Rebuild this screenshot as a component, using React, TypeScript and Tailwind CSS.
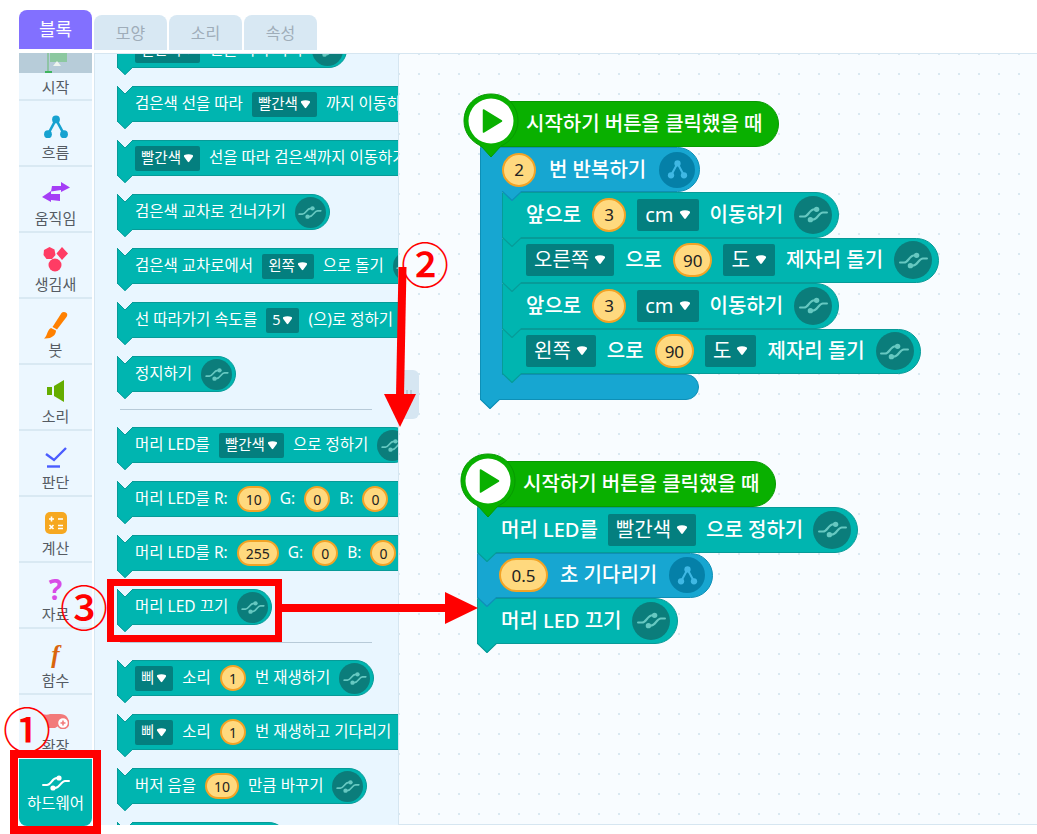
import type { ReactNode } from "react";

const TEAL = "bg-[#00b5b0] border-[#079b98]";
const BLUE = "bg-[#17a6d1] border-[#0e8fb6]";

function HwIcon({ className }: { className: string }) {
  return (
    <svg viewBox="0 0 28 18" className={className} fill="none" stroke="currentColor" strokeWidth="2" strokeLinecap="round">
      <path d="M1 11 H5 C9 11 10 4 15 4" />
      <path d="M27 7 H23 C19 7 18 14 13 14" />
      <circle cx="17" cy="4" r="2.6" fill="currentColor" stroke="none" />
      <circle cx="11" cy="14" r="2.6" fill="currentColor" stroke="none" />
    </svg>
  );
}

function FlowIcon({ className }: { className: string }) {
  return (
    <svg viewBox="0 0 24 24" className={className} fill="currentColor" stroke="currentColor" strokeWidth="2.4">
      <path d="M12 5 L5 18 M12 5 L19 18" fill="none" />
      <circle cx="12" cy="5" r="3.6" stroke="none" />
      <circle cx="4.6" cy="18.6" r="3.6" stroke="none" />
      <circle cx="19.4" cy="18.6" r="3.6" stroke="none" />
    </svg>
  );
}

function Caret({ big }: { big?: boolean }) {
  return (
    <svg viewBox="0 0 12 10" className={big ? "w-[12px] h-[10px] ml-[5px]" : "w-[11px] h-[9px] ml-[2px]"}>
      <path d="M1.5 1.2 C4 0 8 0 10.5 1.2 C11.5 2 11 3 10.5 3.6 L6.8 8.6 C6.3 9.2 5.7 9.2 5.2 8.6 L1.5 3.6 C1 3 .5 2 1.5 1.2 Z" fill="#fff" />
    </svg>
  );
}

function Dd({ v, big }: { v: string; big?: boolean }) {
  return (
    <span className={big ? "flex items-center h-[32px] px-[8px] rounded-[2px] bg-[#047f7f] text-white font-normal text-[20px]" : "flex items-center h-[25px] px-[6px] rounded-[2px] bg-[#047f7f] text-white text-[14.5px]"}>
      {v}
      <Caret big={big} />
    </span>
  );
}

function Num({ v, big, wide }: { v: string; big?: boolean; wide?: boolean }) {
  return (
    <span className={big ? `flex items-center justify-center h-[34px] min-w-[34px] ${wide ? "w-[49px]" : "px-[8px]"} rounded-full bg-[#ffd97e] border-2 border-[#f3a325] text-[#222] font-normal text-[17px]` : "flex items-center justify-center h-[26px] min-w-[26px] px-[7px] rounded-full bg-[#ffd97e] border-2 border-[#f3a325] text-[#222] text-[14px]"}>
      {v}
    </span>
  );
}

function Ico({ big, flow }: { big?: boolean; flow?: boolean }) {
  const size = big ? "w-[38px] h-[38px]" : "w-[31px] h-[31px]";
  if (flow) {
    return (
      <span className="w-[36px] h-[36px] shrink-0 flex items-center justify-center rounded-full bg-[#0580a8] text-[#3fb8e4]">
        <FlowIcon className="w-[21px] h-[21px]" />
      </span>
    );
  }
  return (
    <span className={`${size} shrink-0 flex items-center justify-center rounded-full bg-[#0b7d7b] text-[#66c8c1]`}>
      <HwIcon className={big ? "w-[29px] h-[19px]" : "w-[24px] h-[15px]"} />
    </span>
  );
}

// notch on top, tab underneath
function Block({ children, big, tone = TEAL, tabFill = "#00b5b0", tabStroke = "#079b98", tabLeft = "left-[-1px]", className = "", notch = true }: {
  children?: ReactNode;
  big?: boolean;
  tone?: string;
  tabFill?: string;
  tabStroke?: string;
  tabLeft?: string;
  className?: string;
  notch?: boolean;
}) {
  const base = big
    ? "h-[45.5px] pl-[23px] pr-[6px] gap-[11px] rounded-r-[23px] text-[20px] font-medium"
    : "h-[36px] pl-[17px] pr-[3px] gap-[9px] rounded-r-[18px] text-[15.5px]";
  return (
    <div className={`relative w-max flex items-center border text-white whitespace-nowrap ${tone} ${base} ${className}`}>
      {notch && !big && (
        <svg viewBox="0 0 16 8" className="absolute left-[-1px] top-[-1px] w-[16px] h-[8px]">
          <path d="M0 0 L8 8 L16 0 Z" fill="#e9f6ff" />
          <path d="M0 0 L8 8 L16 0" fill="none" stroke="#079b98" />
        </svg>
      )}
      {children}
      <svg viewBox="0 0 20 10" preserveAspectRatio="none" className={`absolute z-10 ${tabLeft} ${big ? "bottom-[-10px] w-[20px] h-[10px]" : "bottom-[-8px] w-[16px] h-[8px]"}`}>
        <path d="M0 0 L10 10 L20 0 Z" fill={tabFill} />
        <path d="M0 0 L10 9.5 L20 0" fill="none" stroke={tabStroke} strokeWidth="1.2" />
      </svg>
    </div>
  );
}

function Hat() {
  return (
    <div className="relative w-max ml-[18px] mt-[9px] h-[46px] pl-[45px] pr-[16px] flex items-center rounded-r-[23px] bg-[#09b000] border border-[#079a00] text-white text-[20px] font-medium whitespace-nowrap">
      시작하기 버튼을 클릭했을 때
      <svg viewBox="0 0 56 66" className="absolute z-20 left-[-18px] top-[-9px] w-[56px] h-[66px]">
        <path d="M28 1 C44 1 55 13 55 28 C55 40 47 49 38 53 L28 64 L18 53 C9 49 1 40 1 28 C1 13 12 1 28 1 Z" fill="#09b000" stroke="#079a00" />
        <circle cx="28" cy="28" r="22.5" fill="#fff" />
        <path d="M20.5 17 L38.5 28 L20.5 39 Z" fill="#09b000" stroke="#09b000" strokeWidth="1.5" strokeLinejoin="round" />
      </svg>
    </div>
  );
}

function SideItem({ label, icon, border = true }: { label: string; icon: ReactNode; border?: boolean }) {
  return (
    <div className={`h-[66px] shrink-0 flex flex-col items-center pt-[10px] ${border ? "border-b-2 border-[#d9e9f3]" : ""}`}>
      <div className="h-[31px] flex items-center justify-center">{icon}</div>
      <span className="text-[15px] leading-[21px] text-[#555b63]">{label}</span>
    </div>
  );
}

function Gap() {
  return <div className="h-[18px] shrink-0" />;
}

function Divider() {
  return <div className="my-[17px] h-[1px] w-[252px] ml-[3px] bg-[#b7cad8]" />;
}

export default function App() {
  return (
    <div className="relative w-[1037px] h-[834px] overflow-hidden bg-white [font-family:'Noto_Sans','Noto_Sans_CJK_KR',sans-serif]">
      {/* tabs */}
      <div className="h-[53px] pl-[19px] flex gap-[2px]">
        <div className="mt-[10px] h-[39px] w-[73px] flex items-center justify-center rounded-t-[8px] bg-[#8270ff] text-white text-[18px]">블록</div>
        <div className="mt-[15px] h-[35px] w-[73px] flex items-center justify-center rounded-t-[8px] bg-[#d8e8f3] text-[#9fadb9] text-[16px]">모양</div>
        <div className="mt-[15px] h-[35px] w-[73px] flex items-center justify-center rounded-t-[8px] bg-[#d8e8f3] text-[#9fadb9] text-[16px]">소리</div>
        <div className="mt-[15px] h-[35px] w-[73px] flex items-center justify-center rounded-t-[8px] bg-[#d8e8f3] text-[#9fadb9] text-[16px]">속성</div>
      </div>

      <div className="flex h-[773px] pl-[19px]">
        {/* categories */}
        <div className="w-[73px] mr-[2px] shrink-0 flex flex-col bg-[#ecf7ff] overflow-hidden">
          <div className="h-[48px] shrink-0 border-b-2 border-[#d9e9f3] flex flex-col items-center">
            <div className="h-[20px] w-full shrink-0 bg-[#b7ccd9] flex justify-center overflow-hidden">
              <svg viewBox="0 0 34 20" className="w-[34px] h-[20px]">
                <rect x="8" y="0" width="2" height="19" fill="#8fc4a6" />
                <rect x="11" y="0" width="17" height="9" fill="#8cc8a0" />
                <path d="M14 13 L18 8 L22 13 Z" fill="#eef5ee" />
                <rect x="6" y="18" width="7" height="2" fill="#3fb45f" />
              </svg>
            </div>
            <span className="mt-[4px] text-[15px] leading-[20px] text-[#555b63]">시작</span>
          </div>
          <SideItem label="흐름" icon={<FlowIcon className="w-[26px] h-[26px] text-[#17a2d0]" />} />
          <SideItem label="움직임" icon={
            <svg viewBox="0 0 28 24" className="w-[28px] h-[24px]" fill="#a53df6">
              <path d="M10 5 H19 V1 L28 6.5 L19 11 V9 L9 10.5 Z" />
              <path d="M18 13 H9 V10 L0 16 L9 21 V19 L18 20 Z" />
            </svg>
          } />
          <SideItem label="생김새" icon={
            <svg viewBox="0 0 26 26" className="w-[26px] h-[26px]" fill="#ff3c64">
              <path d="M6.5 1 L11.5 3.5 L12.5 9 L9 13 L3.5 13 L0.5 9 L1 4 Z" />
              <path d="M19 1 L25 7.5 L19 14 L13.5 7.5 Z" />
              <circle cx="12" cy="19" r="6.5" />
            </svg>
          } />
          <SideItem label="붓" icon={
            <svg viewBox="0 0 24 28" className="w-[24px] h-[28px]" fill="#ff8000">
              <path d="M17.5 2 C18.5 0.5 21 0.5 22.5 2 C23.5 3 23.5 4.5 22.5 6 L13 18.5 L8.5 16 Z" />
              <path d="M7 17 L12 19.5 C12 24 8 28 0 27.5 C3.5 25.5 2.5 19.5 7 17 Z" />
            </svg>
          } />
          <SideItem label="소리" icon={
            <svg viewBox="0 0 18 22" className="w-[18px] h-[22px]" fill="#65ad00">
              <rect x="0" y="7" width="5" height="8" />
              <path d="M7 6 L17 0 V22 L7 16 Z" />
            </svg>
          } />
          <SideItem label="판단" icon={
            <svg viewBox="0 0 22 22" className="w-[22px] h-[22px]" fill="none" stroke="#4a5cff" strokeWidth="2.4">
              <path d="M1 8 L9 14 L21 2" />
              <path d="M2 20.5 H15" />
            </svg>
          } />
          <SideItem label="계산" icon={
            <svg viewBox="0 0 22 22" className="w-[22px] h-[22px]">
              <rect width="22" height="22" rx="5" fill="#f6a821" />
              <path d="M4 7 H9 M6.5 4.5 V9.5 M13 7 H18 M4.5 13 L8.5 17 M8.5 13 L4.5 17 M13 13.5 H18 M13 16.5 H18" stroke="#fff" strokeWidth="1.6" />
            </svg>
          } />
          <SideItem label="자료" icon={<span className="text-[28px] leading-none font-bold text-[#d84be6]">?</span>} />
          <SideItem label="함수" icon={<span className="text-[25px] leading-none font-bold italic text-[#d9650c] [font-family:'Liberation_Serif',serif]">f</span>} />
          <SideItem label="확장" border={false} icon={
            <svg viewBox="0 0 26 16" className="w-[26px] h-[16px]">
              <path d="M0 1 C2 2 5 2 7 1 H17 C23 1 26 5 25 9 H22 L12 15 H5 L4 9 Z" fill="#f27a7a" />
              <circle cx="20" cy="10" r="5.6" fill="#fff" stroke="#f27a7a" strokeWidth="1.6" />
              <path d="M17.5 10 H22.5 M20 7.5 V12.5" stroke="#f27a7a" strokeWidth="1.6" />
            </svg>
          } />
          <div className="mt-[-2px] flex-1 flex flex-col items-center pt-[15px] bg-[#00b5b0] rounded-b-[8px] text-white">
            <HwIcon className="w-[28px] h-[18px]" />
            <span className="mt-[1px] text-[15.5px] leading-[20px]">하드웨어</span>
          </div>
        </div>

        {/* block palette */}
        <div className="w-[305px] shrink-0 h-[772px] overflow-hidden bg-[#e9f6ff] border-t border-x border-[#d6e6f1]">
          <div className="mt-[-22px] pl-[22px] flex flex-col">
            <Block><Dd v="빨간색" /><span>선을 따라 가기</span><Ico /></Block>
            <Gap />
            <Block>검은색 선을 따라<Dd v="빨간색" />까지 이동하기<Ico /></Block>
            <Gap />
            <Block><Dd v="빨간색" />선을 따라 검은색까지 이동하기<Ico /></Block>
            <Gap />
            <Block>검은색 교차로 건너가기<Ico /></Block>
            <Gap />
            <Block>검은색 교차로에서<Dd v="왼쪽" />으로 돌기<Ico /></Block>
            <Gap />
            <Block>선 따라가기 속도를<Dd v="5" />(으)로 정하기<Ico /></Block>
            <Gap />
            <Block>정지하기<Ico /></Block>
            <Divider />
            <Block>머리 LED를<Dd v="빨간색" />으로 정하기<Ico /></Block>
            <Gap />
            <Block>머리 LED를 R:<Num v="10" />G:<Num v="0" />B:<Num v="0" /><span className="pr-[20px]" /></Block>
            <Gap />
            <Block>머리 LED를 R:<Num v="255" />G:<Num v="0" />B:<Num v="0" /><span className="pr-[20px]" /></Block>
            <Gap />
            <Block>머리 LED 끄기<Ico /></Block>
            <Divider />
            <Block><Dd v="삐" />소리<Num v="1" />번 재생하기<Ico /></Block>
            <Gap />
            <Block><Dd v="삐" />소리<Num v="1" />번 재생하고 기다리기<Ico /></Block>
            <Gap />
            <Block>버저 음을<Num v="10" />만큼 바꾸기<Ico /></Block>
            <Gap />
            <Block>버저 음을 멈추기<Ico /></Block>
          </div>
        </div>

        {/* workspace */}
        <div className="relative flex-1 h-[772px] overflow-hidden border-y border-[#d6e6f1] bg-[#f8fcff] bg-[radial-gradient(circle,#d9e8f1_1.1px,transparent_1.3px)] bg-[length:20px_20px] bg-[position:-10px_-10px]">
          <div className="absolute left-0 top-[316px] w-[20px] h-[49px] rounded-r-[6px] bg-[#d6e6f2] flex items-center justify-center gap-[2px]">
            <span className="w-[2px] h-[10px] bg-[#b9cbd8]" />
            <span className="w-[2px] h-[10px] bg-[#b9cbd8]" />
          </div>

          <div className="absolute left-[63px] top-[38px]">
            <Hat />
            <div className="ml-[18px] w-max">
              <Block big tone={BLUE} tabFill="#17a6d1" tabStroke="#0e8fb6" tabLeft="left-[21px]" className="!pl-[21px] !h-[45px] !gap-[13px] !pr-[4px]">
                <Num big v="2" />
                <span>번 반복하기</span>
                <Ico big flow />
              </Block>
              <div className="flex">
                <div className="relative z-[5] mt-[-1px] mb-[-1px] w-[22px] bg-[#17a6d1] border-l border-[#0e8fb6]" />
                <div className="flex flex-col">
                  <Block big>앞으로<Num big v="3" /><Dd big v="cm" />이동하기<Ico big /></Block>
                  <Block big><Dd big v="오른쪽" />으로<Num big v="90" /><Dd big v="도" />제자리 돌기<Ico big /></Block>
                  <Block big>앞으로<Num big v="3" /><Dd big v="cm" />이동하기<Ico big /></Block>
                  <Block big><Dd big v="왼쪽" />으로<Num big v="90" /><Dd big v="도" />제자리 돌기<Ico big /></Block>
                </div>
              </div>
              <Block big tone={BLUE} tabFill="#17a6d1" tabStroke="#0e8fb6" className="!h-[26px] !w-[219px] !rounded-r-[13px]" />
            </div>
          </div>

          <div className="absolute left-[60px] top-[398px]">
            <Hat />
            <div className="ml-[18px] w-max">
              <Block big className="!gap-[10px]">머리 LED를<Dd big v="빨간색" />으로 정하기<Ico big /></Block>
              <Block big tone={BLUE} tabFill="#17a6d1" tabStroke="#0e8fb6" className="!pl-[21px] !gap-[12px] !pr-[7px]"><Num big wide v="0.5" /><span>초 기다리기</span><Ico big flow /></Block>
              <Block big className="!pr-[7px]">머리 LED 끄기<Ico big /></Block>
            </div>
          </div>
        </div>
      </div>

      {/* hand drawn notes on top of the screenshot */}
      <div className="absolute z-30 left-[10px] top-[750px] w-[91px] h-[84px] border-[8px] border-[#ff0000]" />
      <div className="absolute z-30 left-[107px] top-[579px] w-[175px] h-[63px] border-[7px] border-[#ff0000]" />
      <svg className="absolute z-30 left-0 top-0 w-[1037px] h-[834px] pointer-events-none" viewBox="0 0 1037 834">
        <path d="M398.5 267 H406.5 L404 396 H396 Z" fill="#ff0000" />
        <path d="M384 394 H416 L400 427 Z" fill="#ff0000" />
        <rect x="282" y="604" width="165" height="8" fill="#ff0000" />
        <path d="M445 592 L478 608 L445 624 Z" fill="#ff0000" />
      </svg>
      <span className="absolute z-30 left-[3px] top-[700px] text-[48px] leading-[60px] font-medium text-[#ff0000]">①</span>
      <span className="absolute z-30 left-[401px] top-[235px] text-[48px] leading-[60px] font-medium text-[#ff0000]">②</span>
      <span className="absolute z-30 left-[60px] top-[578px] text-[48px] leading-[60px] font-medium text-[#ff0000]">③</span>
    </div>
  );
}
